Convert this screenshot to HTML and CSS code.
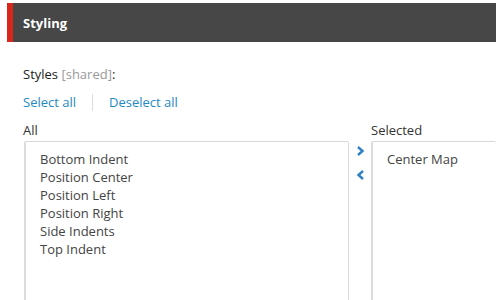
FILE: index.html
```html
<!DOCTYPE html>
<html lang="en">
<head>
    <meta charset="UTF-8">
    <title>Styling</title>
    <link rel="stylesheet" href="styles.css">
</head>
<body>
    <div class="section-header">
        <h2>Styling</h2>
    </div>

    <div class="section-body">
        <div class="field-label">Styles <span class="shared">[shared]</span>:</div>

        <div class="select-links">
            <a href="#" class="link">Select all</a>
            <span class="divider"></span>
            <a href="#" class="link">Deselect all</a>
        </div>

        <div class="multilist">
            <div class="list-col all-col">
                <div class="list-title">All</div>
                <div class="list-box">
                    <div class="list-item">Bottom Indent</div>
                    <div class="list-item">Position Center</div>
                    <div class="list-item">Position Left</div>
                    <div class="list-item">Position Right</div>
                    <div class="list-item">Side Indents</div>
                    <div class="list-item">Top Indent</div>
                </div>
            </div>

            <div class="list-buttons">
                <svg class="arrow" width="9" height="10" viewBox="0 0 9 10">
                    <path d="M2 1 L6.5 5 L2 9" fill="none" stroke="#2e81c4" stroke-width="2.4"/>
                </svg>
                <svg class="arrow" width="9" height="10" viewBox="0 0 9 10">
                    <path d="M7 1 L2.5 5 L7 9" fill="none" stroke="#2e81c4" stroke-width="2.4"/>
                </svg>
            </div>

            <div class="list-col selected-col">
                <div class="list-title">Selected</div>
                <div class="list-box">
                    <div class="list-item">Center Map</div>
                </div>
            </div>
        </div>
    </div>
</body>
</html>
```

FILE: styles.css
```css
* {
    margin: 0;
    padding: 0;
    box-sizing: border-box;
}

body {
    font-family: 'Open Sans', 'Noto Sans', sans-serif;
    font-size: 13px;
    color: #333333;
    background-color: #ffffff;
    overflow: hidden;
}

.section-header {
    margin: 3px 0 0 7px;
    height: 39px;
    background-color: #474747;
    border-left: 6px solid #d9271c;
    display: flex;
    align-items: center;
    padding-left: 10px;
}

.section-header h2 {
    color: #ffffff;
    font-size: 13px;
    font-weight: 700;
}

.section-body {
    padding: 23px 0 0 23px;
}

.field-label {
    line-height: 18px;
    color: #222222;
}

.shared {
    color: #999999;
}

.select-links {
    display: flex;
    align-items: center;
    margin-top: 10px;
    height: 18px;
}

.link {
    color: #1f8ac4;
    text-decoration: none;
}

.divider {
    width: 1px;
    height: 17px;
    background-color: #dddddd;
    margin: 0 16px;
}

.multilist {
    display: flex;
    margin-top: 10px;
}

.list-title {
    line-height: 18px;
    margin-bottom: 2px;
    color: #333333;
}

.all-col {
    width: 326px;
}

.list-box {
    height: 200px;
    border: 1px solid #d8d8d8;
    border-left: 2px solid #dcdcdc;
    border-radius: 2px;
    padding: 8px 0 0 14px;
    margin-left: 1px;
}

.selected-col {
    flex: 1;
}

.selected-col .list-box {
    margin-left: 0;
    border-right: none;
}

.list-item {
    font-size: 13px;
    line-height: 18px;
    color: #444444;
}

.list-buttons {
    width: 22px;
    display: flex;
    flex-direction: column;
    align-items: center;
    padding-top: 25px;
    gap: 14px;
}

.arrow {
    display: block;
}
```
